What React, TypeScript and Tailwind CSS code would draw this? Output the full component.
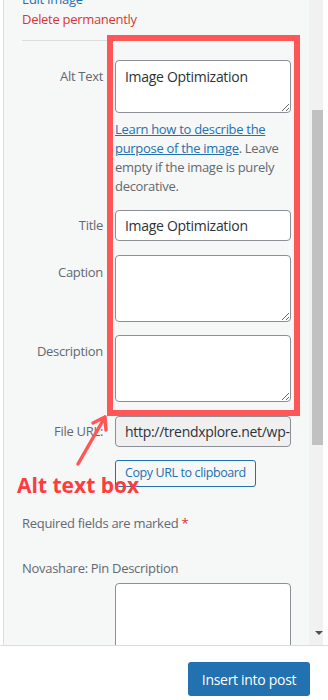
import React from "react";

const FONT = { fontFamily: '"Open Sans", "Noto Sans", Arial, sans-serif' };

function Row({
  label,
  labelPad,
  children,
}: {
  label: string;
  labelPad: string;
  children: React.ReactNode;
}) {
  return (
    <div className="flex items-start">
      <div
        className={`w-[81px] shrink-0 text-right text-[13px] leading-[20px] text-[#646970] ${labelPad}`}
      >
        {label}
      </div>
      <div className="ml-[12px] w-[176px] shrink-0">{children}</div>
    </div>
  );
}

function Area({ value, height }: { value?: string; height: string }) {
  return (
    <textarea
      readOnly
      defaultValue={value}
      className={`block w-full ${height} resize-y rounded-[4px] border border-[#8c8f94] bg-white px-[9px] py-[5px] text-[14px] leading-[21px] tracking-[-0.3px] text-[#2c3338] outline-none`}
      style={FONT}
    />
  );
}

export default function App() {
  return (
    <div
      className="relative flex h-[700px] w-[328px] flex-col overflow-hidden bg-white tracking-[-0.3px]"
      style={FONT}
    >
      {/* sidebar + scrollbar */}
      <div className="flex h-[646px] shrink-0 border-b border-[#dcdcde]">
        <div className="w-[3px] shrink-0 bg-white" />
        <div className="relative w-[306px] shrink-0 overflow-hidden border-l border-[#dcdcde] bg-[#f6f7f7]">
          <div className="mt-[-11px] pl-[18px] pr-[12px]">
            <div className="text-[13px] leading-[20px] text-[#2271b1]">Edit Image</div>
            <div className="text-[13px] leading-[20px] text-[#d63638]">Delete permanently</div>
            <div className="mt-[11px] border-t border-[#dcdcde]" />

            <div className="mt-[19px]">
              <Row label="Alt Text" labelPad="pt-[6px]">
                <Area value="Image Optimization" height="h-[53px]" />
                <p className="mt-[7px] text-[13px] leading-[19px] text-[#646970]">
                  <span className="text-[#2271b1] underline">
                    Learn how to describe the purpose of the image
                  </span>
                  . Leave empty if the image is purely decorative.
                </p>
              </Row>
            </div>

            <div className="mt-[14px]">
              <Row label="Title" labelPad="pt-[5px]">
                <div className="flex h-[31px] items-center rounded-[4px] border border-[#8c8f94] bg-white px-[9px] text-[14px] text-[#2c3338]">
                  Image Optimization
                </div>
              </Row>
            </div>

            <div className="mt-[14px]">
              <Row label="Caption" labelPad="pt-[7px]">
                <Area height="h-[67px]" />
              </Row>
            </div>

            <div className="mt-[13px]">
              <Row label="Description" labelPad="pt-[6px]">
                <Area height="h-[67px]" />
              </Row>
            </div>

            <div className="mt-[14px]">
              <Row label="File URL:" labelPad="pt-[5px]">
                <div className="flex h-[31px] items-center overflow-hidden whitespace-nowrap rounded-[4px] border border-[#8c8f94] bg-[#f0f0f1] px-[9px] text-[14px] text-[#2c3338]">
                  http://trendxplore.net/wp-content/uploads/
                </div>
                <div className="mt-[13px] inline-flex h-[27px] items-center rounded-[3px] border border-[#2271b1] bg-[#f6f7f7] px-[9px] text-[12.5px] tracking-[-0.4px] text-[#2271b1]">
                  Copy URL to clipboard
                </div>
              </Row>
            </div>

            <div className="mt-[26px] text-[13px] leading-[20px] text-[#646970]">
              Required fields are marked <span className="text-[#d63638]">*</span>
            </div>
            <div className="mt-[25px] text-[13px] leading-[20px] text-[#646970]">
              Novashare: Pin Description
            </div>
            <div className="mt-[5px] pl-[93px]">
              <div className="w-[176px]">
                <Area height="h-[90px]" />
              </div>
            </div>
          </div>
        </div>

        {/* scrollbar */}
        <div className="relative w-[14px] shrink-0 bg-[#f1f1f1]">
          <div className="absolute left-[3px] right-0 top-[110px] h-[335px] bg-[#c1c1c1]" />
          <div className="absolute left-[6px] top-[631px] h-0 w-0 border-x-[4px] border-t-[4px] border-x-transparent border-t-[#505050]" />
        </div>
        <div className="flex-1 bg-white" />
      </div>

      {/* toolbar */}
      <div className="flex flex-1 items-start justify-end pr-[18px] pt-[16px]">
        <div className="flex h-[34px] w-[122px] items-center justify-center rounded-[3px] bg-[#2271b1] text-[14px] text-white">
          Insert into post
        </div>
      </div>

      {/* annotation overlay */}
      <div className="pointer-events-none absolute left-[107px] top-[35px] h-[381px] w-[193px] border-[6px] border-[#ff5757]" />
      <svg
        className="pointer-events-none absolute left-0 top-0"
        width="328"
        height="700"
        viewBox="0 0 328 700"
      >
        <path
          d="M78 464 L105 417 M105 417 L93 423 M105 417 L106 430"
          stroke="#ff5757"
          strokeWidth="3.5"
          strokeLinecap="round"
          fill="none"
        />
      </svg>
      <div className="pointer-events-none absolute left-[17px] top-[472px] text-[21px] font-bold leading-[26px] tracking-normal text-[#ff3b3b]">
        Alt text box
      </div>
    </div>
  );
}
